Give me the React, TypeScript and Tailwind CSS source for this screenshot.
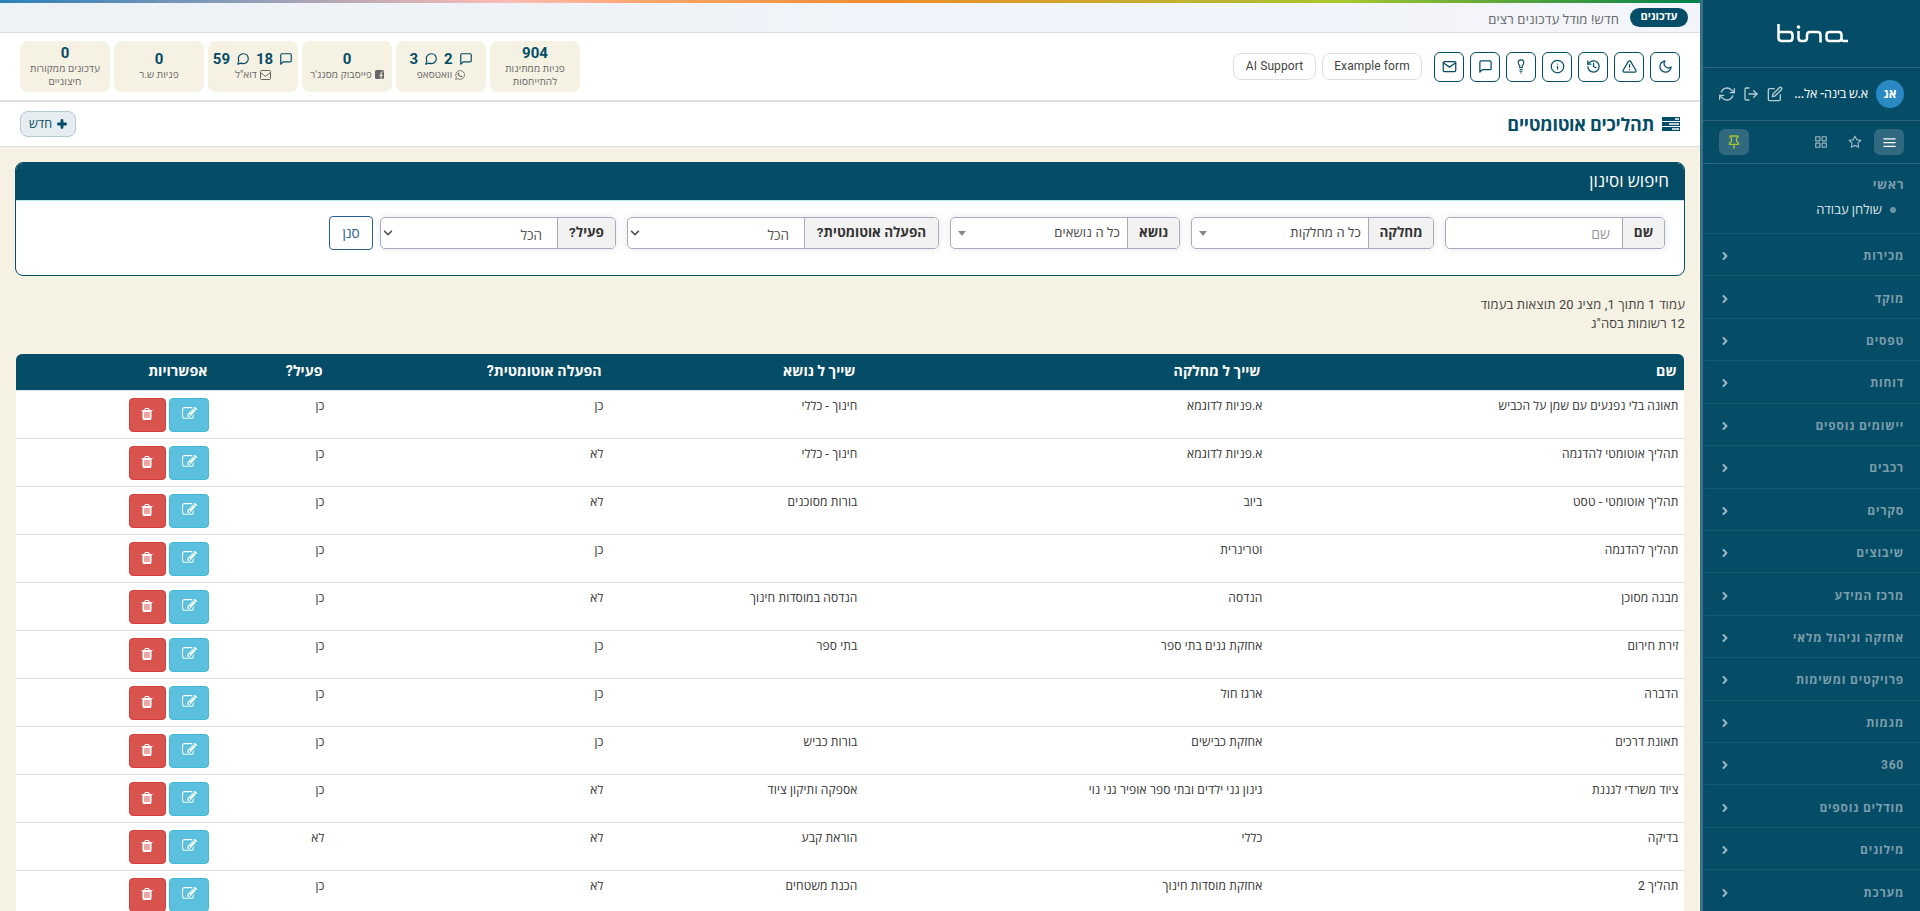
import React from 'react';
import clsx from 'clsx';
import {
    FiAlertTriangle, FiChevronRight, FiEdit, FiGrid, FiInfo, FiLogOut, FiMail, FiMenu,
    FiMessageCircle, FiMessageSquare, FiMoon, FiRefreshCw, FiStar,
} from 'react-icons/fi';
import { FaChevronDown } from 'react-icons/fa';
import { LuHistory } from 'react-icons/lu';

const menuItems = [
    'מכירות', 'מוקד', 'טפסים', 'דוחות', 'יישומים נוספים', 'רכבים', 'סקרים', 'שיבוצים',
    'מרכז המידע', 'אחזקה וניהול מלאי', 'פרויקטים ומשימות', 'מגמות', '360', 'מודלים נוספים',
    'מילונים', 'מערכת',
];

const rows = [
    ['תאונה בלי נפגעים עם שמן על הכביש', 'א.פניות לדוגמא', 'חינוך - כללי', 'כן', 'כן'],
    ['תהליך אוטומטי להדגמה', 'א.פניות לדוגמא', 'חינוך - כללי', 'לא', 'כן'],
    ['תהליך אוטומטי - טסט', 'ביוב', 'בורות מסוכנים', 'לא', 'כן'],
    ['תהליך להדגמה', 'וטרינרית', '', 'כן', 'כן'],
    ['מבנה מסוכן', 'הנדסה', 'הנדסה במוסדות חינוך', 'לא', 'כן'],
    ['זירת חירום', 'אחזקת גנים בתי ספר', 'בתי ספר', 'כן', 'כן'],
    ['הדברה', 'ארגז חול', '', 'כן', 'כן'],
    ['תאונת דרכים', 'אחזקת כבישים', 'בורות כביש', 'כן', 'כן'],
    ['ציוד משרדי לגננת', 'גינון גני ילדים ובתי ספר אופיר גני נוי', 'אספקה ותיקון ציוד', 'לא', 'כן'],
    ['בדיקה', 'כללי', 'הוראת קבע', 'לא', 'לא'],
    ['תהליך 2', 'אחזקת מוסדות חינוך', 'הכנת משטחים', 'לא', 'כן'],
];

const columns = ['שם', 'שייך ל מחלקה', 'שייך ל נושא', 'הפעלה אוטומטית?', 'פעיל?', 'אפשרויות'];

const Logo: React.FC = () => (
    <svg width="71" height="19" viewBox="0 0 71 19" fill="none" stroke="#fff" strokeWidth="2.5" strokeLinejoin="round">
        <path d="M1.500 0v14q0 3 3 3h8q3 0 3-3v-3q0-3-3-3h-11" />
        <path d="M21.500 7v7q0 3 3 3h2.500q3 0 3-3v-3q0-3 3-3h7.500q3 0 3 3v7.500" />
        <path d="M52.500 8h9q3 0 3 3v3.500q0 2.500 2.500 2.500h4M64.500 12v2q0 3-3 3h-9q-3 0-3-3v-3q0-3 3-3" />
        <circle cx="21.500" cy="3" r="1.800" fill="#fff" stroke="none" />
    </svg>
);

const PinIcon: React.FC = () => (
    <svg width="12" height="14" viewBox="0 0 12 14" fill="none" stroke="currentColor" strokeWidth="1.3" strokeLinejoin="round" strokeLinecap="round">
        <path d="M2 1h8v1.300l-1.500 1v3q2.200 1 2.200 3H1.300q0-2 2.200-3v-3l-1.500-1zM6 9.500V13.300" />
    </svg>
);

const TasksIcon: React.FC = () => (
    <svg width="18" height="14" viewBox="0 0 18 14">
        <path fill="#054c66" d="M0 0h18v4H0zM0 5h18v4H0zM0 10h18v4H0z" />
        <path fill="#fff" d="M13 1.300h4v1.400h-4zM7 6.300h10v1.400H7zM10 11.300h7v1.400h-7z" />
    </svg>
);

const BulbIcon: React.FC = () => (
    <svg width="14" height="15" viewBox="0 0 14 15" fill="none" stroke="currentColor" strokeWidth="1.100">
        <path d="M5.700 8.500V6.500Q4.200 5.500 4.200 3.700A2.800 2.800 0 0 1 9.800 3.700Q9.800 5.500 8.300 6.500V8.500zM5.500 10.500h3M5.500 12.300h3M6.300 14h1.400" />
    </svg>
);

const WhatsappIcon: React.FC = () => (
    <svg width="10" height="10" viewBox="0 0 24 24" fill="none" stroke="currentColor" strokeWidth="2">
        <path d="M1.500 22.500L3.200 17A10.500 10.500 0 1 1 7 20.900z" />
        <path fill="currentColor" stroke="none" d="M8 6q2 0 2.500 3l-1 1.500q1.500 3 4 4l1.500-1.500q3 .800 3 2-1 3-4 2.500Q8 16 6 9.500 6.200 7 8 6z" />
    </svg>
);

const EnvelopeIcon: React.FC = () => (
    <svg width="11" height="10" viewBox="0 0 11 10" fill="none" stroke="currentColor">
        <path d="M.5 1.500q0-1 1-1h8q1 0 1 1v7q0 1-1 1h-8q-1 0-1-1zM.5 2.500L5.500 6.500 10.500 2.500" />
    </svg>
);

const FacebookIcon: React.FC = () => (
    <svg width="9" height="9" viewBox="0 0 9 9">
        <rect width="9" height="9" rx="1.500" fill="currentColor" />
        <path d="M6 9V5.500M4.500 5.200h3.500M6 6V3.200Q6 1.700 7.900 1.800" stroke="#f6f2e3" fill="none" />
    </svg>
);

const PlusIcon: React.FC = () => (
    <svg width="10" height="10" viewBox="0 0 10 10" stroke="currentColor" strokeWidth="2.800" strokeLinecap="round">
        <path d="M5 1.400v7.200M1.400 5h7.200" />
    </svg>
);

const PencilSquare: React.FC = () => (
    <svg width="15" height="15" viewBox="0 0 1792 1792" fill="#fff">
        <path d="M888 1184l116-116-152-152-116 116v56h96v96h56zm440-720q-16-16-33 1l-350 350q-17 17-1 33t33-1l350-350q17-17 1-33zm80 594v190q0 119-84.500 203.500t-203.500 84.500h-832q-119 0-203.500-84.500t-84.500-203.500v-832q0-119 84.500-203.500t203.500-84.500h832q63 0 117 25 15 7 18 23 3 17-9 29l-49 49q-14 14-32 8-23-6-45-6h-832q-66 0-113 47t-47 113v832q0 66 47 113t113 47h832q66 0 113-47t47-113v-126q0-13 9-22l64-64q15-15 35-7t20 29zm-96-738l288 288-672 672h-288v-288zm444 132l-92 92-288-288 92-92q28-28 68-28t68 28l152 152q28 28 28 68t-28 68z" />
    </svg>
);

const TrashIcon: React.FC = () => (
    <svg width="14" height="14" viewBox="0 0 1792 1792" fill="#fff">
        <path d="M704 1376v-704q0-14-9-23t-23-9h-64q-14 0-23 9t-9 23v704q0 14 9 23t23 9h64q14 0 23-9t9-23zm256 0v-704q0-14-9-23t-23-9h-64q-14 0-23 9t-9 23v704q0 14 9 23t23 9h64q14 0 23-9t9-23zm256 0v-704q0-14-9-23t-23-9h-64q-14 0-23 9t-9 23v704q0 14 9 23t23 9h64q14 0 23-9t9-23zm-544-992h448l-48-117q-7-9-17-11h-317q-10 2-17 11zm928 32v64q0 14-9 23t-23 9h-96v948q0 83-47 143.500t-113 60.500h-832q-66 0-113-58.500t-47-141.500v-952h-96q-14 0-23-9t-9-23v-64q0-14 9-23t23-9h309l70-167q15-37 54-63t79-26h320q40 0 79 26t54 63l70 167h309q14 0 23 9t9 23z" />
    </svg>
);

const Sidebar: React.FC = () => (
    <aside className="w-[217px] shrink-0 bg-[#054c66] text-white">
        <div className="flex h-[68px] items-center justify-center border-b border-[#2a647b] pl-0.5">
            <Logo />
        </div>
        <div className="flex h-[53px] items-center border-b border-[#2a647b] px-4">
            <span className="flex size-7 items-center justify-center rounded-full bg-[#2a88c2] text-[12px] font-bold">אנ</span>
            <span className="mr-2 w-[74px] whitespace-nowrap text-[12.5px] font-medium tracking-[-0.2px]">א.ש בינה- אל...</span>
            <div className="mr-auto flex items-center gap-2 text-[#b5cad3]">
                <FiEdit size={16} />
                <FiLogOut size={16} />
                <FiRefreshCw size={16} />
            </div>
        </div>
        <div className="flex h-[43px] items-center gap-1 border-b border-[#2a647b] px-4 text-[#9cb7c2]">
            <span className="flex h-[26px] w-[30px] items-center justify-center rounded-md bg-[#316980] text-white"><FiMenu size={15} /></span>
            <span className="flex h-[26px] w-[30px] items-center justify-center"><FiStar size={14} /></span>
            <span className="flex h-[26px] w-[30px] items-center justify-center"><FiGrid size={14} /></span>
            <span className="mr-auto flex h-[26px] w-[30px] items-center justify-center rounded-md bg-[#316980] text-[#a6c62d]"><PinIcon /></span>
        </div>
        <div className="h-[70px] border-b border-[#1c5971] px-4 pt-[11px]">
            <div className="text-[13px] font-bold leading-5 tracking-[0.5px] text-[#7b9dab]">ראשי</div>
            <div className="mt-[3px] flex items-center pr-2 text-[13px] leading-6 text-[#dbe5e9]">
                <span className="ml-2 size-1.5 rounded-full bg-[#6b93a3]" />
                שולחן עבודה
            </div>
        </div>
        {menuItems.map((item) => (
            <div key={item} className="flex h-[42.43px] items-center justify-between border-b border-[#1c5971] px-4 pt-[3px] text-[12px] font-bold tracking-[0.78px] text-[#7b9dab]">
                {item}
                <FiChevronRight size={12} strokeWidth={4} className="text-[#9cb7c2]" />
            </div>
        ))}
    </aside>
);

const Stat: React.FC<{ value: React.ReactNode; children: React.ReactNode }> = ({ value, children }) => (
    <div className="flex h-[51px] w-[90px] flex-col items-center justify-center rounded-lg bg-[#f6f2e3] pb-0.5 text-center">
        <div className="flex items-center gap-1.5 text-[15px] font-bold leading-[18px] text-[#054c66]">{value}</div>
        <div className="flex items-center justify-center gap-[3px] whitespace-nowrap text-[10px] leading-[13px] tracking-[0.1px] text-[#666]">{children}</div>
    </div>
);

const Header: React.FC = () => (
    <>
        <div className="h-[3px] bg-[linear-gradient(90deg,#2980b9_0%,#ffbcb4_30%,#ffa66b_38%,#ef8b2c_52%,#a6c62d_79%,#00804c_100%)]" />
        <div className="flex h-[30px] items-center border-b border-[#dcdee0] bg-[linear-gradient(90deg,#edf2f7,#f3f5fb)] pr-3">
            <span className="flex h-[19px] w-[58px] items-center justify-center rounded-full bg-[#054c66] text-[11px] font-bold text-white">עדכונים</span>
            <span className="mr-[11px] pt-1 text-[13px] tracking-[0.18px] text-[#666]">חדש! מודל עדכונים רצים</span>
        </div>
        <div className="flex h-[69px] items-center border-b-2 border-[#dcdee0] bg-white px-5">
            <div className="flex gap-1.5">
                {[
                    <FiMoon size={15} />, <FiAlertTriangle size={15} />, <LuHistory size={15} />, <FiInfo size={15} />,
                    <BulbIcon />, <FiMessageSquare size={15} />, <FiMail size={15} />,
                ].map((icon, i) => (
                    <span key={i} className="flex size-[30px] items-center justify-center rounded-md border border-[#054c66] text-[#054c66]">{icon}</span>
                ))}
            </div>
            <div className="mr-3 flex gap-1.5 text-[12px] tracking-[0.1px] text-[#444]">
                <span className="flex h-[27px] w-[100px] items-center justify-center rounded-lg border border-[#dedede] pb-px">Example form</span>
                <span className="flex h-[27px] w-[83px] items-center justify-center rounded-lg border border-[#dedede] pb-px">AI Support</span>
            </div>
            <div className="mr-auto flex gap-1">
                <Stat value="904"><span>פניות ממתינות<br />להתייחסות</span></Stat>
                <Stat value={<><FiMessageSquare size={14} />2 <FiMessageCircle size={14} />3</>}><WhatsappIcon />וואטסאפ</Stat>
                <Stat value="0"><FacebookIcon />פייסבוק מסנג'ר</Stat>
                <Stat value={<><FiMessageSquare size={14} />18 <FiMessageCircle size={14} />59</>}><EnvelopeIcon />דוא"ל</Stat>
                <Stat value="0">פניות ש.ר</Stat>
                <Stat value="0"><span>עדכונים ממקורות<br />חיצוניים</span></Stat>
            </div>
        </div>
        <div className="flex h-[45px] items-center border-b border-[#dcdee0] bg-white px-5 text-[#054c66]">
            <TasksIcon />
            <h1 className="mr-2 text-[18px] font-bold tracking-[-0.25px]">תהליכים אוטומטיים</h1>
            <span className="mr-auto flex h-[26px] w-14 items-center justify-center gap-[5px] rounded-lg border border-[#b5c9d1] bg-[#e6edf0] text-[12.5px]">
                <PlusIcon />חדש
            </span>
        </div>
    </>
);

interface FieldProps {
    label: string;
    value: string;
    kind: 'input' | 'search' | 'select';
    className: string;
    labelClass: string;
}

const Field: React.FC<FieldProps> = ({ label, value, kind, className, labelClass }) => (
    <div className={clsx('flex h-8 shrink-0 rounded-[5px] border border-[#a5abc0] bg-white shadow-[0_0_8px_rgba(0,0,0,0.1)]', className)}>
        <span className={clsx('flex items-center justify-center rounded-r-[4px] border-l border-[#a5abc0] bg-[#f2f2f2] pb-px text-[13.5px] font-bold text-[#333]', labelClass)}>{label}</span>
        <span
            className={clsx('flex flex-1 items-center', {
                'pr-3 pt-0.5 text-[14px] text-[#999]': kind === 'input',
                'pr-[7px] pl-[7px] text-[13px] tracking-[0.15px] text-[#444]': kind === 'search',
                'pr-[15px] pl-0.5 text-[13.5px] text-[#555]': kind === 'select',
            })}
        >
            <span className={kind === 'select' ? 'pt-[5px]' : ''}>{value}</span>
            {kind === 'search' && <span className="mr-auto border-x-4 border-t-[5px] border-x-transparent border-t-[#888]" />}
            {kind === 'select' && <FaChevronDown size={10} className="mr-auto" />}
        </span>
    </div>
);

const Filters: React.FC = () => (
    <section className="h-[114px] overflow-hidden rounded-lg border border-[#054c66] bg-white">
        <h2 className="flex h-[38px] items-center border-b border-[#bce8f1] bg-[#054c66] pr-[15px] text-[17px] text-white">חיפוש וסינון</h2>
        <div className="flex gap-[11px] pt-4 pr-[19px]">
            <Field label="שם" value="שם" kind="input" className="w-[220px]" labelClass="w-[42px]" />
            <Field label="מחלקה" value="כל ה מחלקות" kind="search" className="w-[243px]" labelClass="w-[65px]" />
            <Field label="נושא" value="כל ה נושאים" kind="search" className="w-[230px]" labelClass="w-[52px]" />
            <Field label="הפעלה אוטומטית?" value="הכל" kind="select" className="w-[312px]" labelClass="w-[134px]" />
            <Field label="פעיל?" value="הכל" kind="select" className="w-[236px]" labelClass="w-[58px]" />
            <span className="-mr-1 -mt-px flex h-[34px] w-11 items-center justify-center rounded-[4px] border border-[#286090] text-[13.5px] text-[#286090]">סנן</span>
        </div>
    </section>
);

const ProcessTable: React.FC = () => (
    <div className="mx-px mt-[21px] overflow-hidden rounded-t-[6px] bg-white">
        <table className="w-full table-fixed border-collapse text-right">
            <colgroup>
                <col className="w-[416px]" />
                <col className="w-[405px]" />
                <col className="w-[254px]" />
                <col className="w-[279px]" />
                <col className="w-[115px]" />
                <col />
            </colgroup>
            <thead>
                <tr className="h-9 bg-[#054c66] text-[14.2px] text-white">
                    {columns.map((column) => <th key={column} className="p-0 pr-[7.5px] font-bold">{column}</th>)}
                </tr>
            </thead>
            <tbody>
                {rows.map((row) => (
                    <tr key={row[0]} className="h-12 border-t border-[#dee0e2] align-top text-[12px] leading-[18px] tracking-[0.15px] text-[#333]">
                        {row.map((cell, i) => <td key={i} className="p-0 pt-1.5 pr-[5.5px]">{cell}</td>)}
                        <td className="p-0 pt-[7px] pr-1.5">
                            <div className="flex gap-[3px]">
                                <span className="flex h-[34px] w-10 items-center justify-center rounded-[4px] border border-[#46b8da] bg-[#5bc0de] pb-0.5"><PencilSquare /></span>
                                <span className="flex h-[34px] w-[37px] items-center justify-center rounded-[4px] border border-[#d43f3a] bg-[#d9534f] pb-0.5 pr-px"><TrashIcon /></span>
                            </div>
                        </td>
                    </tr>
                ))}
            </tbody>
        </table>
    </div>
);

const App: React.FC = () => {
    return (
        <div dir="rtl" className="flex h-[911px] overflow-hidden bg-[#f6f2e3] font-['Roboto','Open_Sans',sans-serif]">
            <Sidebar />
            <div className="w-[3px] shrink-0 bg-[#3b7087]" />
            <main className="min-w-0 flex-1">
                <Header />
                <div className="px-[15px] pt-[15px]">
                    <Filters />
                    <p className="mt-[19px] text-[13px] leading-[19px] tracking-[0.13px] text-[#444]">
                        עמוד 1 מתוך 1, מציג 20 תוצאות בעמוד<br />
                        12 רשומות בסה"ג
                    </p>
                    <ProcessTable />
                </div>
            </main>
        </div>
    );
};

export default App;
